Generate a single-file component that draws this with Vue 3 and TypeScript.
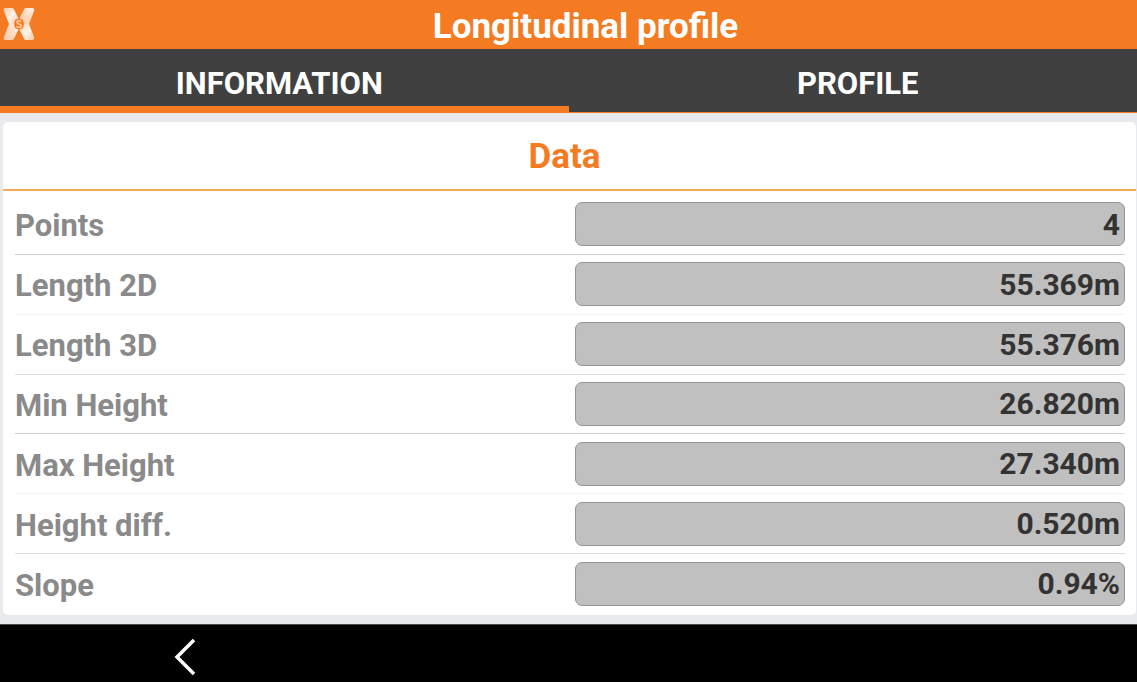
<script setup lang="ts">
import { ref } from 'vue'

interface Measurement {
  id: string
  label: string
  value: string
}

type Tab = 'information' | 'profile'

const activeTab = ref<Tab>('information')

const tabs: { id: Tab; label: string }[] = [
  { id: 'information', label: 'INFORMATION' },
  { id: 'profile', label: 'PROFILE' },
]

const measurements: Measurement[] = [
  { id: 'points', label: 'Points', value: '4' },
  { id: 'length-2d', label: 'Length 2D', value: '55.369m' },
  { id: 'length-3d', label: 'Length 3D', value: '55.376m' },
  { id: 'min-height', label: 'Min Height', value: '26.820m' },
  { id: 'max-height', label: 'Max Height', value: '27.340m' },
  { id: 'height-diff', label: 'Height diff.', value: '0.520m' },
  { id: 'slope', label: 'Slope', value: '0.94%' },
]
</script>

<template>
  <div class="screen">
    <header class="title-bar">
      <svg class="logo" viewBox="0 0 32 34" aria-hidden="true">
        <defs>
          <linearGradient id="logo-light" x1="0" y1="0" x2="1" y2="1">
            <stop offset="0" stop-color="#fbc9a4" />
            <stop offset="0.5" stop-color="#fff3e9" />
            <stop offset="1" stop-color="#fbc7a0" />
          </linearGradient>
          <linearGradient id="logo-shade" x1="1" y1="0" x2="0" y2="1">
            <stop offset="0" stop-color="#fff0e4" />
            <stop offset="1" stop-color="#fbc7a0" />
          </linearGradient>
        </defs>
        <path d="M2 1H9Q10.500 1 11 2.500L15.500 11.500L12 13L11 17H6L1 4Q0 1 2 1Z" fill="url(#logo-light)" />
        <path d="M23 1H29Q32 1 31 4L26 17H21L20 13L16.500 11.500L21 2.500Q21.500 1 23 1Z" fill="url(#logo-shade)" />
        <path d="M6 17H11L12 21L15.500 22.500L11 31.500Q10.500 33 9 33H2Q0 33 1 30Z" fill="url(#logo-shade)" />
        <path d="M26 17L31 30Q32 33 29 33H23Q21.500 33 21 31.500L16.500 22.500L20 21L21 17Z" fill="url(#logo-light)" />
        <path d="M18.200 15Q17.800 13.800 16 13.800Q14 13.800 14 15.300Q14 16.600 16 17Q18.300 17.500 18.300 18.900Q18.300 20.400 16 20.400Q14 20.400 13.600 19" fill="none" stroke="#fbd0ae" stroke-width="1.400" />
      </svg>
      <h1 class="title">Longitudinal profile</h1>
    </header>

    <nav class="tabs" role="tablist">
      <button
        v-for="tab in tabs"
        :key="tab.id"
        type="button"
        role="tab"
        class="tab"
        :class="{ active: activeTab === tab.id }"
        :aria-selected="activeTab === tab.id"
        @click="activeTab = tab.id"
      >
        {{ tab.label }}
      </button>
    </nav>

    <main class="content">
      <section class="card">
        <h2 class="card-title">Data</h2>
        <div class="rows">
          <div v-for="item in measurements" :key="item.id" class="row">
            <label class="label" :for="item.id">{{ item.label }}</label>
            <input :id="item.id" class="value" type="text" :value="item.value" readonly />
          </div>
        </div>
      </section>
    </main>

    <footer class="system-bar">
      <button type="button" class="back" aria-label="Back">
        <svg viewBox="0 0 22 38" aria-hidden="true">
          <path d="M20 2L3 19L20 36" fill="none" stroke="#fff" stroke-width="3.500" />
        </svg>
      </button>
    </footer>
  </div>
</template>

<style>
body {
  margin: 0;
}
</style>

<style scoped>
.screen {
  display: flex;
  flex-direction: column;
  min-height: 100vh;
  background: #e9eaee;
  font-family: Roboto, sans-serif;
  font-weight: 700;
}

.title-bar {
  display: grid;
  grid-template-columns: 34px 1fr;
  align-items: center;
  height: 49px;
  box-sizing: border-box;
  padding-bottom: 1px;
  background: #f57b22;
}

.logo {
  width: 32px;
  height: 34px;
  margin-left: 3px;
}

.title {
  margin: 0;
  padding-top: 6px;
  text-align: center;
  font-size: 35px;
  line-height: 40px;
  color: #fff;
}

.tabs {
  display: grid;
  grid-template-columns: 1fr 1fr;
  height: 64px;
  background: #404040;
}

.tab {
  padding: 5px 0 0 10px;
  border: 0;
  border-bottom: 1px solid #f57b22;
  background: none;
  color: #fff;
  font: inherit;
  font-size: 31px;
}

.tab:first-child {
  padding-right: 10px;
  padding-left: 0;
}

.tab.active {
  padding-top: 11px;
  border-bottom-width: 7px;
}

.content {
  display: flex;
  flex: 1;
  padding: 9px 1px 9px 3px;
}

.card {
  display: flex;
  flex: 1;
  flex-direction: column;
  border-radius: 5px;
  background: #fff;
}

.card-title {
  margin: 0;
  padding: 3px 10px 0 0;
  border-bottom: 2px solid #f5a95c;
  text-align: center;
  font-size: 35px;
  line-height: 64px;
  color: #f57b22;
}

.rows {
  display: grid;
  flex: 1;
  grid-auto-rows: 1fr;
  padding: 4px 11px 1px 12px;
}

.row {
  display: grid;
  grid-template-columns: 560fr 550fr;
  align-items: center;
  border-bottom: 1px solid #cfcfcf;
}

.row:nth-child(3n + 2) {
  border-color: #f3f3f3;
}

.row:nth-child(3n) {
  border-color: #dedede;
}

.row:last-child {
  border-color: transparent;
}

.label {
  padding-top: 4px;
  font-size: 31px;
  line-height: 36px;
  color: #8a8a8a;
}

.value {
  width: 100%;
  height: 44px;
  box-sizing: border-box;
  padding: 0 4px;
  border: 1px solid #969696;
  border-radius: 7px;
  background: #c0c0c0;
  color: #333;
  font: inherit;
  font-size: 30px;
  text-align: right;
  outline: 0;
}

.system-bar {
  display: flex;
  align-items: center;
  height: 58px;
  padding-top: 7px;
  box-sizing: border-box;
  border-top: 1px solid #4a4a4a;
  background: #000;
}

.back {
  display: flex;
  margin-left: 15.300%;
  padding: 0;
  border: 0;
  background: none;
}

.back svg {
  width: 22px;
  height: 38px;
}
</style>
